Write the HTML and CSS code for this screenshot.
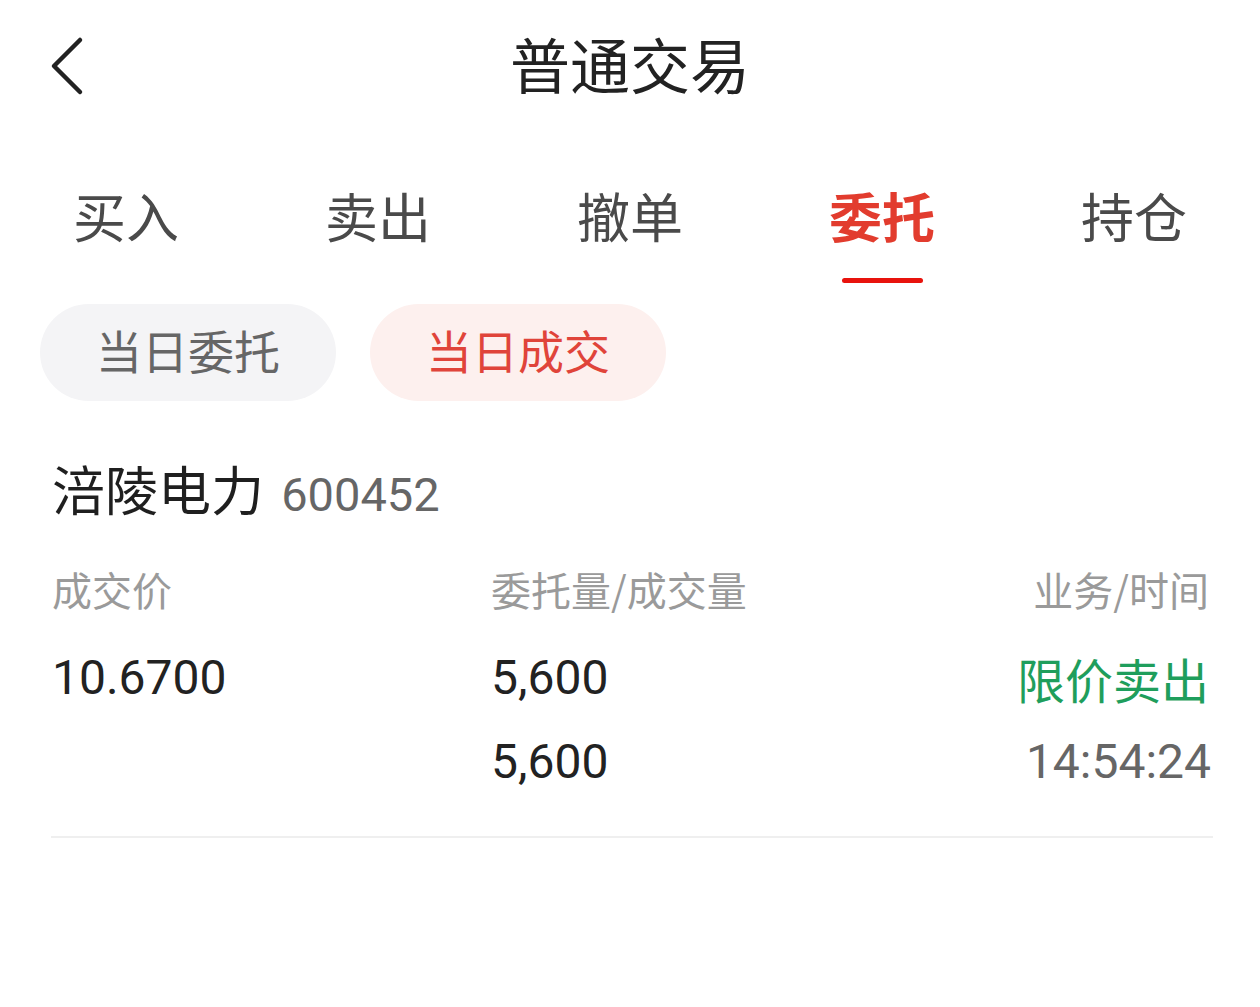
FILE: index.html
```html
<!DOCTYPE html>
<html lang="zh-CN">
<head>
    <meta charset="UTF-8">
    <meta name="viewport" content="width=device-width, initial-scale=1.0">
    <title>普通交易</title>
    <link rel="stylesheet" href="styles.css">
</head>
<body>
    <div class="nav">
        <span class="voltar">
            <svg width="40" height="60" viewBox="0 0 40 60">
                <polyline points="30,4 4,30 30,56" fill="none" stroke="#222" stroke-width="4.5" stroke-linecap="round" stroke-linejoin="round"/>
            </svg>
        </span>
        <h1>普通交易</h1>
        <span></span>
    </div>

    <div class="abas">
        <div class="aba"><span class="rotulo">买入</span></div>
        <div class="aba"><span class="rotulo">卖出</span></div>
        <div class="aba"><span class="rotulo">撤单</span></div>
        <div class="aba ativa"><span class="rotulo">委托</span><i class="traco"></i></div>
        <div class="aba"><span class="rotulo">持仓</span></div>
    </div>

    <div class="filtros">
        <button class="chip">当日委托</button>
        <button class="chip selecionado">当日成交</button>
    </div>

    <div class="lista">
        <div class="item">
            <div class="acao">涪陵电力 <span class="codigo">600452</span></div>
            <div class="grade">
                <span class="cab">成交价</span>
                <span class="cab">委托量/成交量</span>
                <span class="cab dir">业务/时间</span>

                <span class="val">10.6700</span>
                <span class="val">5,600</span>
                <span class="val dir verde">限价卖出</span>

                <span class="val"></span>
                <span class="val">5,600</span>
                <span class="val dir cinza">14:54:24</span>
            </div>
        </div>
    </div>
</body>
</html>
```

FILE: styles.css
```css
body {
    font-family: Roboto, "Noto Sans CJK SC", sans-serif;
    background-color: #fff;
    margin: 0;
    padding: 0;
    color: #222;
}

.nav {
    height: 132px;
    display: grid;
    grid-template-columns: 1fr auto 1fr;
    align-items: center;
}

.voltar {
    padding-left: 50px;
    display: flex;
    align-items: center;
}

.nav h1 {
    margin: 0 0 6px;
    font-family: "Noto Sans CJK SC", sans-serif;
    font-size: 60px;
    font-weight: 400;
    color: #222;
    line-height: 1;
}

.abas {
    display: flex;
}

.aba {
    flex: 1;
    display: flex;
    flex-direction: column;
    align-items: center;
    padding-top: 51px;
}

.rotulo {
    font-family: "Noto Sans CJK SC", sans-serif;
    font-size: 53px;
    line-height: 64px;
    color: #4a4a4a;
}

.aba.ativa .rotulo {
    color: #e23c2e;
    font-weight: 700;
}

.traco {
    display: block;
    width: 81px;
    height: 5px;
    margin-top: 31px;
    border-radius: 3px;
    background-color: #e8130d;
}

.aba:not(.ativa) .rotulo {
    margin-bottom: 36px;
}

.filtros {
    display: flex;
    gap: 34px;
    padding-left: 40px;
    margin-top: 21px;
}

.chip {
    width: 296px;
    height: 97px;
    border: none;
    border-radius: 49px;
    background-color: #f4f4f6;
    color: #666;
    font-family: "Noto Sans CJK SC", sans-serif;
    font-size: 46px;
    padding: 0 0 8px;
}

.chip.selecionado {
    background-color: #fdf0ee;
    color: #e0443a;
}

.lista {
    padding: 0 47px 0 51px;
}

.item {
    border-bottom: 2px solid #efefef;
    padding-bottom: 32px;
}

.acao {
    margin-top: 60px;
    font-size: 53px;
    line-height: 64px;
    color: #1f1f1f;
    padding-left: 1px;
}

.codigo {
    font-size: 47px;
    color: #666;
    margin-left: 4px;
}

.grade {
    display: grid;
    grid-template-columns: 439px 1fr auto;
    margin-top: 34px;
    padding-left: 1px;
    padding-right: 4px;
}

.cab {
    font-family: "Noto Sans CJK SC", sans-serif;
    font-size: 40px;
    line-height: 56px;
    color: #9a9a9a;
    margin-bottom: 19px;
}

.val {
    font-size: 48px;
    line-height: 84px;
    color: #222;
}

.dir {
    text-align: right;
}

.verde {
    font-family: "Noto Sans CJK SC", sans-serif;
    color: #1f9e5c;
}

.cinza {
    color: #666;
    margin-right: -2px;
}
```
